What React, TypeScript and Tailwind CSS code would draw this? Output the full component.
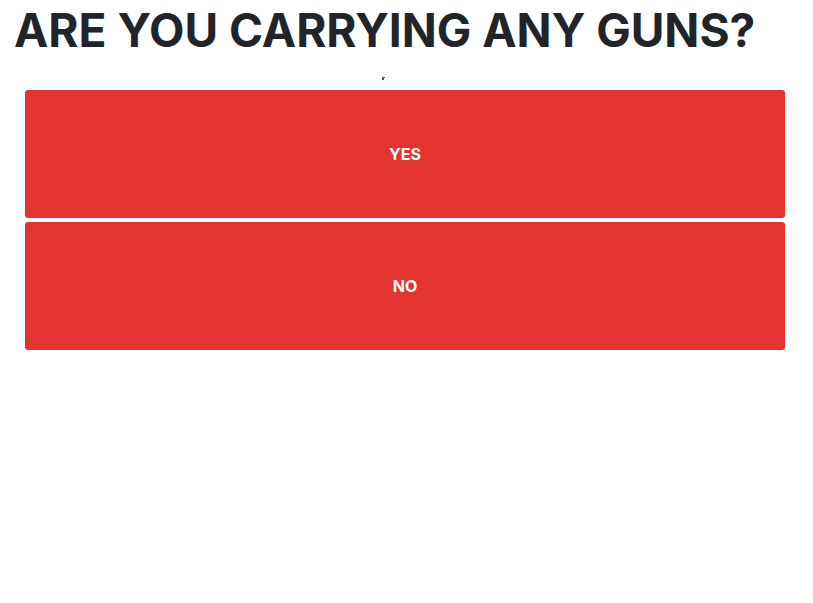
export default function App() {
  return (
    <div className="min-h-screen w-full bg-white" style={{ fontFamily: 'Inter, "Liberation Sans", sans-serif' }}>
      <div className="pl-[14px] pt-[3px]">
        <h1 className="h-[55px] text-[46px] font-bold leading-[55px] text-[#212529]">ARE YOU CARRYING ANY GUNS?</h1>
      </div>
      <div className="relative h-[32px]">
        <div className="absolute left-[382px] top-[19px] h-[3px] w-[3px] border-l-2 border-t-[1px] border-[#555]" />
      </div>
      <div className="flex flex-col gap-[4px] pl-[25px] pr-[28px]">
        <button className="flex h-[128px] w-full items-center justify-center rounded-[3px] bg-[#e3342f] text-[16px] font-bold text-white">YES</button>
        <button className="flex h-[128px] w-full items-center justify-center rounded-[3px] bg-[#e3342f] text-[16px] font-bold text-white">NO</button>
      </div>
    </div>
  );
}
